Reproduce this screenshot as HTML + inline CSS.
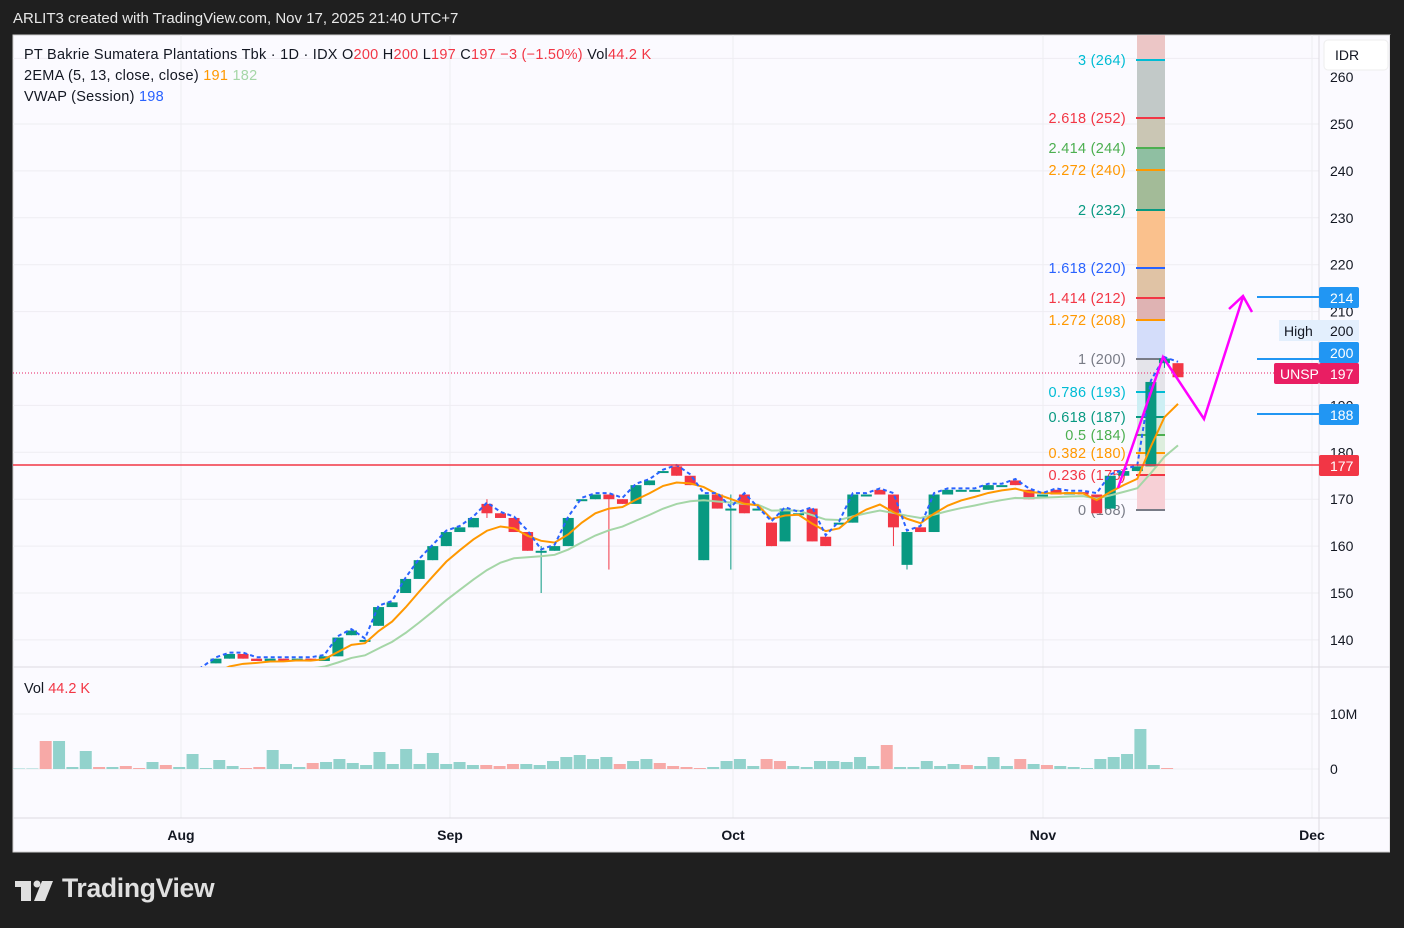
<!DOCTYPE html>
<html><head><meta charset="utf-8"><style>
body{margin:0;width:1404px;height:928px;background:#1f1f1f;overflow:hidden;font-family:"Liberation Sans",sans-serif}
#hdr{position:absolute;left:13px;top:10px;color:#e8e8e8;font-size:15px}
#logo{position:absolute;left:62px;top:873px;color:#e0e0e0;font-size:26.5px;font-weight:bold;letter-spacing:-0.3px}
svg{position:absolute;left:0;top:0}
</style></head><body>
<div id="hdr">ARLIT3 created with TradingView.com, Nov 17, 2025 21:40 UTC+7</div>
<svg width="1404" height="928" id="s" font-family="Liberation Sans, sans-serif">
<rect x="13" y="35" width="1377" height="817" fill="#fbfaff" stroke="#cfcfcf"/>
<g id="grid" stroke="#eeedf2" stroke-width="1"></g>
<line x1="13" y1="667" x2="1390" y2="667" stroke="#dcdbe0"/>
<line x1="13" y1="818" x2="1390" y2="818" stroke="#dcdbe0"/>
<line x1="1319" y1="35" x2="1319" y2="852" stroke="#dcdbe0"/>
<g id="fib"></g>
<g id="vol"></g>
<g id="c"></g>
<line x1="13" y1="465" x2="1319" y2="465" stroke="#f23645" stroke-width="1.5"/>
<line x1="13" y1="373" x2="1319" y2="373" stroke="#e91e63" stroke-dasharray="1,2" stroke-width="1"/>
<polyline points="1118,488 1163,357 1204,419 1243,297" fill="none" stroke="#ff00ff" stroke-width="2.5"/>
<polyline points="1229,309 1243,296 1252,312" fill="none" stroke="#ff00ff" stroke-width="2.5"/>
<line x1="1257" y1="297" x2="1319" y2="297" stroke="#2196f3" stroke-width="2"/>
<line x1="1257" y1="359" x2="1319" y2="359" stroke="#2196f3" stroke-width="2"/>
<line x1="1257" y1="414" x2="1319" y2="414" stroke="#2196f3" stroke-width="2"/>
<g font-size="14.5" fill="#131722" xml:space="preserve">
<text x="24" y="59" letter-spacing="0.25">PT Bakrie Sumatera Plantations Tbk · 1D · IDX  O<tspan fill="#f23645">200</tspan>  H<tspan fill="#f23645">200</tspan>  L<tspan fill="#f23645">197</tspan>  C<tspan fill="#f23645">197</tspan>  <tspan fill="#f23645">−3 (−1.50%)</tspan>  Vol<tspan fill="#f23645">44.2 K</tspan></text>
<text x="24" y="80" letter-spacing="0.25">2EMA (5, 13, close, close)  <tspan fill="#ff9800">191</tspan>  <tspan fill="#a5d6a7">182</tspan></text>
<text x="24" y="101" letter-spacing="0.25">VWAP (Session)  <tspan fill="#2962ff">198</tspan></text>
<text x="24" y="693">Vol  <tspan fill="#f23645">44.2 K</tspan></text>
</g>
<g font-size="14" fill="#131722" id="axis"></g>
<rect x="1324" y="40" width="64" height="30" rx="4" fill="#fff" stroke="#eee"/>
<text x="1335" y="60" font-size="14" fill="#131722">IDR</text>
<rect x="1279" y="320" width="40" height="21" fill="#e3effd"/><text x="1284" y="336" font-size="14" fill="#131722">High</text>
<rect x="1319" y="320" width="40" height="21" fill="#e3effd"/><text x="1330" y="336" font-size="14" fill="#131722">200</text>
<rect x="1319" y="287" width="40" height="21" rx="2" fill="#2196f3"/><text x="1330" y="303" font-size="14" fill="#fff">214</text>
<rect x="1319" y="342" width="40" height="21" rx="2" fill="#2196f3"/><text x="1330" y="358" font-size="14" fill="#fff">200</text>
<rect x="1274" y="363" width="45" height="21" rx="2" fill="#e91e63"/><text x="1280" y="379" font-size="14" fill="#fff">UNSP</text>
<rect x="1319" y="363" width="40" height="21" rx="2" fill="#e91e63"/><text x="1330" y="379" font-size="14" fill="#fff">197</text>
<rect x="1319" y="404" width="40" height="21" rx="2" fill="#2196f3"/><text x="1330" y="420" font-size="14" fill="#fff">188</text>
<rect x="1319" y="455" width="40" height="21" rx="2" fill="#f23645"/><text x="1330" y="471" font-size="14" fill="#fff">177</text>
<g font-size="14" fill="#131722" font-weight="bold" text-anchor="middle">
<text x="181" y="840">Aug</text><text x="450" y="840">Sep</text><text x="733" y="840">Oct</text><text x="1043" y="840">Nov</text><text x="1312" y="840">Dec</text>
</g>
<rect x="1390" y="35" width="14" height="820" fill="#1f1f1f"/>
<g fill="#e0e0e0"><rect x="15" y="881" width="16" height="6"/><rect x="21" y="881" width="10" height="20"/><circle cx="37" cy="884" r="3.5"/><polygon points="42,881 53,881 45,901 34,901"/></g>
</svg>
<div id="logo">TradingView</div>
<script>
const NS="http://www.w3.org/2000/svg";
function el(p,t,a){const e=document.createElementNS(NS,t);for(const k in a)e.setAttribute(k,a[k]);document.getElementById(p).appendChild(e);return e;}
const Y=p=>124+(250-p)*4.69;
[264,250,240,230,220,210,190,180,170,160,150,140].forEach(p=>el('grid','line',{x1:13,x2:1319,y1:Y(p),y2:Y(p)}));
[714,769].forEach(y=>el('grid','line',{x1:13,x2:1319,y1:y,y2:y}));
[181,450,733,1043,1312].forEach(x=>el('grid','line',{x1:x,x2:x,y1:35,y2:818}));
[[250,"250"],[240,"240"],[230,"230"],[220,"220"],[210,"210"],[190,"190"],[180,"180"],[170,"170"],[160,"160"],[150,"150"],[140,"140"],[260,"260"]].forEach(a=>{const t=el('axis','text',{x:1330,y:Y(a[0])+5});t.textContent=a[1];});
[[714,"10M"],[769,"0"]].forEach(a=>{const t=el('axis','text',{x:1330,y:a[0]+5});t.textContent=a[1];});
const zones=[[35,60,"#ecc6c6"],[60,118,"#c2c9c8"],[118,148,"#cac6b4"],[148,170,"#8fbfa2"],[170,210,"#a3bb98"],[210,268,"#fac18d"],[268,298,"#e0c3a5"],[298,320,"#dfb3b3"],[320,359,"#d4ddfa"],[359,392,"#e4e4ea"],[392,417,"#cdeff4"],[417,435,"#d6e9de"],[435,453,"#ddeede"],[453,475,"#fbe5cf"],[475,510,"#f7d0d6"]];
zones.forEach(z=>el('fib','rect',{x:1137,y:z[0],width:28,height:z[1]-z[0],fill:z[2]}));
const fibs=[["3 (264)",60,"#00bcd4"],["2.618 (252)",118,"#f23645"],["2.414 (244)",148,"#4caf50"],["2.272 (240)",170,"#ff9800"],["2 (232)",210,"#089981"],["1.618 (220)",268,"#2962ff"],["1.414 (212)",298,"#f23645"],["1.272 (208)",320,"#ff9800"],["1 (200)",359,"#787b86"],["0.786 (193)",392,"#00bcd4"],["0.618 (187)",417,"#089981"],["0.5 (184)",435,"#4caf50"],["0.382 (180)",453,"#ff9800"],["0.236 (175)",475,"#f23645"],["0 (168)",510,"#787b86"]];
fibs.forEach(f=>{el('fib','line',{x1:1136,x2:1165,y1:f[1],y2:f[1],stroke:f[2],"stroke-width":2});const t=el('fib','text',{x:1126,y:f[1]+5,"text-anchor":"end","font-size":14.5,"letter-spacing":0.3,fill:f[2]});t.textContent=f[0];});
const C=[[128,129],[129,130],[130,129],[129,128],[128,129],[129,130],[130,129],[129,130],[130,132],[132,134],[135,136],[136,137],[137,136],[136,135.5],[135.5,136],[136,135.5],[135.5,136],[136,135.5],[135.5,136.5],[136.5,140.5],[141,142],[140,140],[143,147],[147,148],[150,153],[153,157],[157,160],[160,163],[163,164],[164,166],[169,167,170,166],[167,166],[166,163],[163,159],[159,159,160,150],[159,160],[160,166],[170,170],[170,171],[171,170,171,155],[170,169],[169,173],[173,174],[176,176],[177,175],[175,173],[157,171],[171,168],[168,168,171,155],[171,167],[168,168],[165,160],[161,168],[167,167],[168,161],[162,160],[165,165],[165,171],[171,171],[172,171],[171,164,171,160],[156,163,163,155],[164,163],[163,171],[171,172],[172,172],[172,172],[172,173],[173,173],[174,173],[172,170],[171,171],[172,171],[171,171.5],[171.5,171],[171,167],[168,175],[175,176],[176,177],[177,195],[199,200,200,198],[199,196]];
const N=C.length;
let e5=null,e13=null,p5=[],p13=[],vw=[];
C.forEach((c,i)=>{const x=1178-13.55*(N-1-i),o=c[0],cl=c[1],h=c[2]||Math.max(o,cl),l=c[3]||Math.min(o,cl);
 e5=e5==null?cl:e5+(cl-e5)*2/6;e13=e13==null?cl-4:e13+(cl-e13)*2/14;p5.push(x+","+Y(e5));p13.push(x+","+Y(e13));vw.push(x+","+Y(Math.max(o,cl)+0.3));
 const col=cl>=o?"#089981":"#f23645";
 if(Y(l)>667&&Y(h)>667)return;
 el('c','line',{x1:x,x2:x,y1:Y(h),y2:Math.min(Y(l),667),stroke:col});
 const y1=Y(Math.max(o,cl)),y2=Y(Math.min(o,cl));
 el('c','rect',{x:x-5.5,y:y1,width:11,height:Math.max(2,Math.min(y2,667)-y1),fill:col});
});
const clip=el('s','clipPath',{id:'cp'});const cr=document.createElementNS(NS,'rect');cr.setAttribute('x',13);cr.setAttribute('y',35);cr.setAttribute('width',1306);cr.setAttribute('height',632);clip.appendChild(cr);
el('c','polyline',{points:p13.join(" "),fill:"none",stroke:"#a5d6a7","stroke-width":2,"clip-path":"url(#cp)"});
el('c','polyline',{points:p5.join(" "),fill:"none",stroke:"#ff9800","stroke-width":2,"clip-path":"url(#cp)"});
el('c','polyline',{points:vw.join(" "),fill:"none",stroke:"#2962ff","stroke-width":2,"stroke-dasharray":"4,3","clip-path":"url(#cp)"});
const V="0.5 0.5 28r 28 2 18 2r 2 3r 1r 7 4r 2 15 1 9 3 1r 2r 19 5 2 6r 7 10 6 4 17 5 20 5 16 5 7 4 4r 3r 5r 5 4 8 12 14 10 12 5r 8 10 6r 3r 2r 1r 2 8 10 3 10r 8r 3 2 8 8 7 12 3 24r 2 2 8 3 5 4r 3 12 3 10r 5 4r 3 2 1 10 12 15 40 4 1r".split(" ");
V.forEach((v,i)=>{const x=19+13.35*i;const r=v.endsWith("r");const h=parseFloat(v);el('vol','rect',{x:x-6,y:769-h,width:12,height:h,fill:r?"#f7a9a7":"#92d2cc"});});
</script>
</body></html>
